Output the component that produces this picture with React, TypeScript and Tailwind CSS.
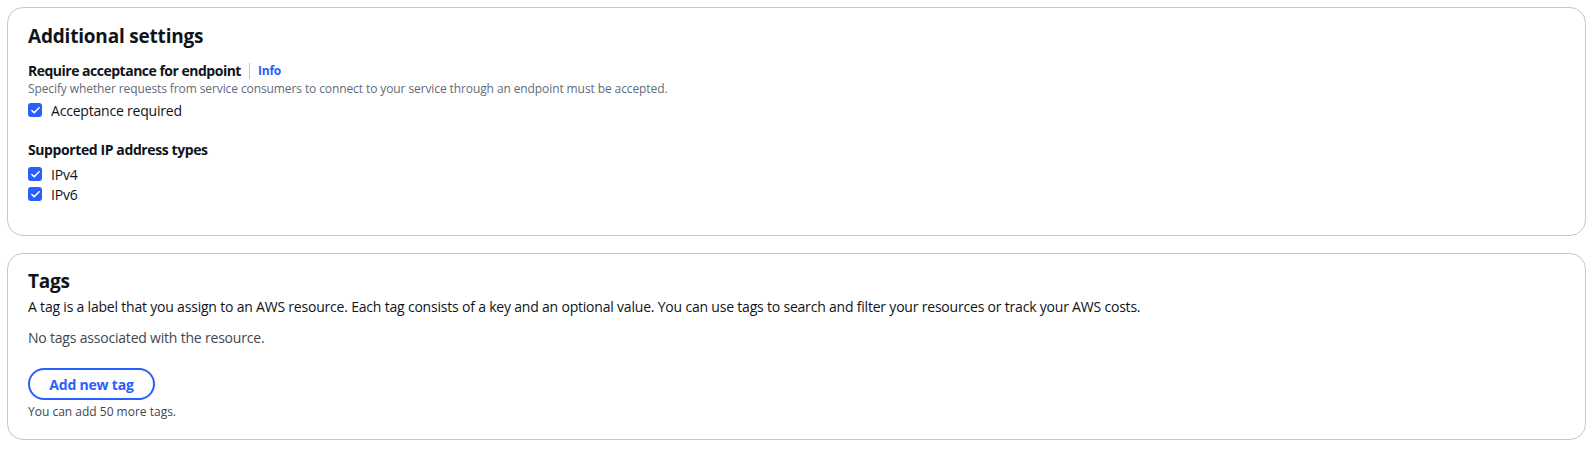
import { Check } from 'lucide-react'

function Checkbox({ label }: { label: string }) {
  return (
    <label className="flex h-[20px] items-center gap-[9px]">
      <span className="flex h-[14px] w-[14px] items-center justify-center rounded-[3px] bg-[#295eff]">
        <Check className="h-[11px] w-[11px] text-white" strokeWidth={3.5} />
      </span>
      <span className="text-[14px] tracking-[-0.2px] text-[#0f141a]">{label}</span>
    </label>
  )
}

function Card({ children, className }: { children: React.ReactNode; className?: string }) {
  return (
    <div className={`rounded-[16px] border border-[#c6c6cd] bg-white px-[20px] ${className ?? ''}`}>
      {children}
    </div>
  )
}

export default function App() {
  return (
    <div
      className="min-h-[450px] bg-white px-[7px] pt-[7px] text-[#0f141a]"
      style={{ fontFamily: '"Open Sans", "Noto Sans", sans-serif' }}
    >
      <Card className="h-[229px] pt-[16px]">
        <h2 className="text-[19px] font-bold leading-[24px] tracking-[-0.2px]">Additional settings</h2>

        <div className="mt-[13px] flex h-[20px] items-center">
          <span className="text-[14px] font-bold leading-[20px] tracking-[-0.5px]">Require acceptance for endpoint</span>
          <span className="mx-[8px] h-[16px] w-px bg-[#c6c6cd]" />
          <a className="text-[12px] font-bold tracking-[-0.2px] text-[#295eff]">Info</a>
        </div>
        <p className="text-[12px] leading-[16px] tracking-[-0.1px] text-[#5f6b7a]">
          Specify whether requests from service consumers to connect to your service through an endpoint must be accepted.
        </p>
        <div className="mt-[3px]">
          <Checkbox label="Acceptance required" />
        </div>

        <div className="mt-[20px] text-[14px] font-bold leading-[20px] tracking-[-0.4px]">Supported IP address types</div>
        <div className="mt-[4px] flex flex-col">
          <Checkbox label="IPv4" />
          <Checkbox label="IPv6" />
        </div>
      </Card>

      <Card className="mt-[17px] h-[187px] pt-[15px]">
        <h2 className="text-[19px] font-bold leading-[24px] tracking-[-0.2px]">Tags</h2>
        <p className="mt-[4px] text-[14px] leading-[20px] tracking-[-0.2px]">
          A tag is a label that you assign to an AWS resource. Each tag consists of a key and an optional value. You can use tags to search and filter your resources or track your AWS costs.
        </p>
        <p className="mt-[11px] text-[14px] leading-[20px] tracking-[-0.2px] text-[#424650]">No tags associated with the resource.</p>
        <button className="mt-[20px] flex h-[32px] w-[127px] items-center justify-center rounded-full border-2 border-[#295eff] text-[14px] font-bold tracking-[-0.2px] text-[#295eff]">
          Add new tag
        </button>
        <p className="mt-[4px] text-[12px] leading-[16px] text-[#424650]">You can add 50 more tags.</p>
      </Card>
    </div>
  )
}
